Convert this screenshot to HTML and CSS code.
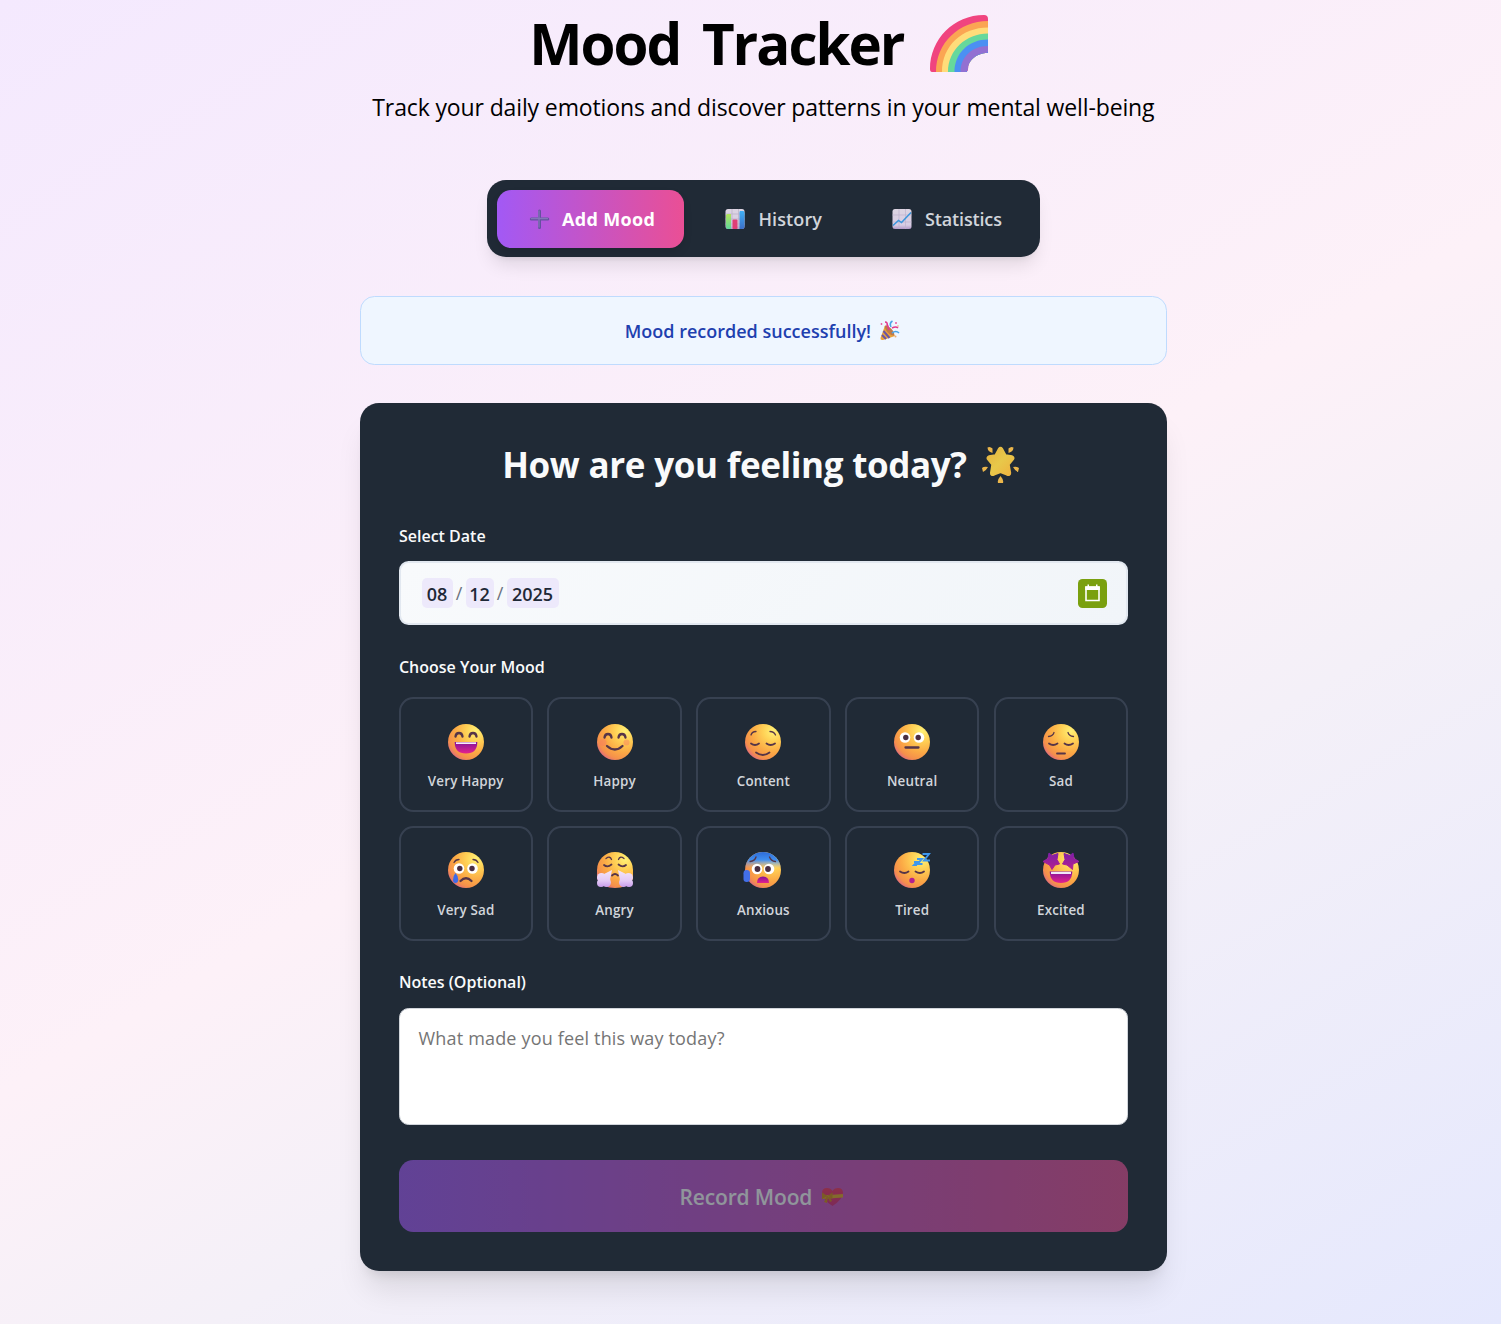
FILE: index.html
```html
<!DOCTYPE html>
<html lang="en">
<head>
<meta charset="utf-8">
<title>Mood Tracker</title>
<link rel="stylesheet" href="styles.css">
</head>
<body>
<svg class="defs" aria-hidden="true">
  <defs>
    <radialGradient id="skin" cx="0.78" cy="0.2" r="0.95">
      <stop offset="0" stop-color="#fff176"/><stop offset="0.3" stop-color="#ffd055"/><stop offset="0.62" stop-color="#fba945"/><stop offset="0.84" stop-color="#f5904b"/><stop offset="1" stop-color="#dd6488"/>
    </radialGradient>
    <linearGradient id="mouth" x1="0" y1="0" x2="0" y2="1"><stop offset="0" stop-color="#84129a"/><stop offset="1" stop-color="#e5228c"/></linearGradient>
    <linearGradient id="cold" x1="0" y1="0" x2="0" y2="1"><stop offset="0" stop-color="#2e6bd8"/><stop offset="0.22" stop-color="#3f8ff0"/><stop offset="0.45" stop-color="#9a9ee0" stop-opacity="0"/></linearGradient>
    <linearGradient id="stars" x1="0" y1="0" x2="0" y2="1"><stop offset="0" stop-color="#7f1ea8"/><stop offset="1" stop-color="#b3208f"/></linearGradient>
    <linearGradient id="steam" gradientUnits="userSpaceOnUse" x1="0" y1="18" x2="0" y2="36"><stop offset="0" stop-color="#f3e6fb"/><stop offset="0.6" stop-color="#e3c9f6"/><stop offset="1" stop-color="#c495ea"/></linearGradient>
    <linearGradient id="paper" x1="0" y1="0" x2="0" y2="1"><stop offset="0" stop-color="#dcd4e2"/><stop offset="0.8" stop-color="#d8cde4"/><stop offset="1" stop-color="#b39ac8"/></linearGradient>
    <linearGradient id="green" x1="0" y1="0" x2="0" y2="1"><stop offset="0" stop-color="#b4e35c"/><stop offset="1" stop-color="#5fd79b"/></linearGradient>
    <linearGradient id="blue" x1="0" y1="0" x2="0" y2="1"><stop offset="0" stop-color="#3fb0f5"/><stop offset="1" stop-color="#3c6fc8"/></linearGradient>
    <linearGradient id="sun" x1="0" y1="0" x2="1" y2="1"><stop offset="0" stop-color="#e6b23e"/><stop offset="0.5" stop-color="#e8c84a"/><stop offset="1" stop-color="#efb13f"/></linearGradient>
    <linearGradient id="heart" x1="0" y1="0" x2="0" y2="1"><stop offset="0" stop-color="#f8365d"/><stop offset="1" stop-color="#d92a7a"/></linearGradient>
  </defs>
</svg>

<main class="page">
  <header class="header">
    <h1 class="title"><span>Mood Tracker</span>
      <svg class="rainbow" viewBox="0 0 58 57">
        <path d="M2 57Q0 57 0 54C0 24 24 0 54 0Q58 0 58 4V36Q58 38 55 38C45 38 38 46 38 54Q38 57 35 57Z" fill="#f0447f"/>
        <path d="M6 57C6 28 29 6 58 6V38C46 38 37 46 37 57Z" fill="#fba553"/>
        <path d="M12 57C12 31 32 12.500 58 12.500V38C46 38 37 46 37 57Z" fill="#ffdc7a"/>
        <path d="M18 57C18 35 36 18.500 58 18.500V38C46 38 37 46 37 57Z" fill="#66d89c"/>
        <path d="M24.500 57C24.500 38 39 24.500 58 24.500V38C46 38 37 46 37 57Z" fill="#4b90f3"/>
        <path d="M30.500 57C30.500 42 42 31 58 31V36Q58 38 55 38C45 39 38 46 38 54Q37.500 57 35 57Z" fill="#9270d2"/>
      </svg>
    </h1>
    <p class="subtitle">Track your daily emotions and discover patterns in your mental well-being</p>
  </header>

  <nav class="tabs">
    <button class="tab tab-add active">
      <svg class="tab-icon" viewBox="0 0 20 20"><path d="M10.500 2V18.500M2.300 10H18.800" stroke="#65519f" stroke-width="3" stroke-linecap="round"/><path d="M10 2V18M2.300 9.500H18.500" stroke="#8376b8" stroke-width="1.300" stroke-linecap="round"/></svg>
      <span>Add Mood</span>
    </button>
    <button class="tab tab-history">
      <svg class="tab-icon" viewBox="0 0 20 20"><rect x=".5" width="19" height="20" rx="2.500" fill="url(#paper)"/><path d="M7 0V20M13.500 0V20M.5 5H19.500M.5 10H19.500M.5 15H19.500" stroke="#b9b0c6" stroke-width=".7"/><path d="M2 5H6V20H3Q1 20 1 18V6Z" fill="url(#green)"/><rect x="7.500" y="10.500" width="5" height="9.500" rx="1" fill="#df3e76"/><path d="M15 2H18.500Q19.500 3 19.500 4V17.500Q19.500 20 17 20H14.500V3Z" fill="url(#blue)"/></svg>
      <span>History</span>
    </button>
    <button class="tab tab-stats">
      <svg class="tab-icon" viewBox="0 0 20 20"><rect x=".5" width="19" height="20" rx="2.500" fill="url(#paper)"/><path d="M7 0V20M13.500 0V20M.5 6H19.500M.5 13H19.500" stroke="#bfb3cd" stroke-width=".7"/><path d="M1 16.500L6.500 11.500L9.500 13.500L19 3.500" fill="none" stroke="#3b96dc" stroke-width="1.500"/></svg>
      <span>Statistics</span>
    </button>
  </nav>

  <div class="notice"><span>Mood recorded successfully!</span>
    <svg class="party" viewBox="0 0 20 20"><path d="M5 4.500Q12 8 15 15L3 19Q0 19.500 .5 17Z" fill="#e9a23b"/><path d="M3.500 10L9.500 17M2 14L6 18" stroke="#6b55a5" stroke-width="2"/><ellipse cx="9.500" cy="9.500" rx="2.500" ry="6.500" transform="rotate(-43 9.500 9.500)" fill="#c07a48"/><path d="M7 5Q8 1 5 1M9 9L7.500 4M12 7Q16 5 18 7" fill="none" stroke="#e23a8e" stroke-width="1.600"/><path d="M11 6Q9 2 12.500 0M12 12Q16 9 19 12" fill="none" stroke="#4aa5e8" stroke-width="1.600"/><circle cx="1.500" cy="3" r=".9" fill="#e85aa0"/><circle cx="16" cy="2" r="1" fill="#e85aa0"/><circle cx="15.500" cy="15.500" r="1" fill="#edae6e"/><circle cx="18" cy="5" r=".8" fill="#edae6e"/></svg>
  </div>

  <section class="card">
    <h2 class="heading"><span>How are you feeling today?</span>
      <svg class="star" viewBox="0 0 37 37"><path d="M17 3Q18.500 1 20 3L23.500 9.500L30 10.500Q32 11.500 31 13L26.500 18.500L28 27Q28 29.500 25 28.500L18.500 26L12 28.500Q9 29.500 9.200 27L10.500 18.500L6 13Q5 11.500 7 10.500L13.500 9.500Z" fill="url(#sun)" stroke="url(#sun)" stroke-width="2.400" stroke-linejoin="round"/><g fill="#ebb64b"><path d="M5.500 1.500Q8 0 10.500 2.500L10.500 7Q5.500 5.500 5.500 1.500ZM31.500 1.500Q29 0 26.500 2.500L26.500 7Q31.500 5.500 31.500 1.500ZM0 22Q2 20 6 21Q4 25 1 26ZM37 22Q35 20 31 21Q33 25 36 26ZM18.500 30Q22 34 21 37H16Q15 34 18.500 30Z"/></g></svg>
    </h2>

    <div class="label label-date">Select Date</div>
    <div class="date">
      <div class="date-fields"><b class="mm">08</b><i>/</i><b class="dd">12</b><i>/</i><b class="yy">2025</b></div>
      <svg class="calendar" viewBox="0 0 29 29"><rect width="29" height="29" rx="4.500" fill="#7aa00f"/><path d="M8 8H21V21.500H8Z" fill="none" stroke="#fff" stroke-width="1.600"/><path d="M7.200 7.500H21.800V11H7.200ZM9.500 5.500H11V8H9.500ZM18 5.500H19.500V8H18Z" fill="#fff"/></svg>
    </div>

    <div class="label label-mood">Choose Your Mood</div>
    <div class="moods">
      <button class="mood"><svg viewBox="0 0 36 36"><circle cx="18" cy="18" r="18" fill="url(#skin)"/><path d="M7.500 12.500Q8 9 11 9T14.500 12.500M21.500 12.500Q22 9 25 9T28.500 12.500" class="line thick"/><path d="M6.700 18H29.300Q29.300 29.500 18 29.500T6.700 18Z" fill="url(#mouth)"/><path d="M8 18.300H28V20H8Z" fill="#f5eafa"/></svg><span>Very Happy</span></button>
      <button class="mood"><svg viewBox="0 0 36 36"><circle cx="18" cy="18" r="18" fill="url(#skin)"/><g fill="#fa7b62" opacity=".45"><circle cx="6" cy="18.500" r="3.500"/><circle cx="29.500" cy="18.500" r="3"/></g><path d="M7.500 13.500Q8 10 11 10T14.500 13.500M21.500 13.500Q22 10 25 10T28.500 13.500M10 22Q18 29 25.500 22" class="line thick"/></svg><span>Happy</span></button>
      <button class="mood"><svg viewBox="0 0 36 36"><circle cx="18" cy="18" r="18" fill="url(#skin)"/><path d="M6 11Q7 7.500 11 7.500M25 7.500Q29 7.500 30.500 11" class="line thin"/><path d="M6 19.500Q10 22.500 14 19.500M21.500 19.500Q25.500 22.500 30 19.500M11 28.500Q18 33.500 24.500 28.500" class="line"/></svg><span>Content</span></button>
      <button class="mood"><svg viewBox="0 0 36 36"><circle cx="18" cy="18" r="18" fill="url(#skin)"/><g fill="#fff"><circle cx="11" cy="13.500" r="5.300"/><circle cx="25" cy="13.500" r="5.300"/></g><g fill="#4a2f42"><circle cx="11.800" cy="13.500" r="2.700"/><circle cx="24.200" cy="13.500" r="2.700"/></g><path d="M11.500 23.500H24.500" class="line thick"/></svg><span>Neutral</span></button>
      <button class="mood"><svg viewBox="0 0 36 36"><circle cx="18" cy="18" r="18" fill="url(#skin)"/><path d="M5.500 12.500Q10 12 11 8.500M25 8.500Q26 12 30.500 12.500" class="line thin"/><path d="M6 19.500Q10 22.500 14.500 19.500M21.500 19.500Q25.500 22.500 30 19.500M14 29.500H22" class="line"/></svg><span>Sad</span></button>
      <button class="mood"><svg viewBox="0 0 36 36"><circle cx="18" cy="18" r="18" fill="url(#skin)"/><path d="M6 10.500Q7.500 7.500 11 7.500M25 7.500Q28.500 7.500 30 10.500" class="line thin"/><g fill="#fff"><circle cx="11" cy="16.500" r="5.300"/><circle cx="24.500" cy="16.500" r="5.300"/></g><g fill="#4a2f42"><circle cx="11.800" cy="16.500" r="2.700"/><circle cx="24" cy="16.500" r="2.700"/></g><path d="M12.500 29Q18 23.500 23.500 29" class="line thick"/><path d="M7.500 21Q10.500 24 10.300 28Q10 31 7.500 31T5 28Q4.800 24 7.500 21Z" fill="#3f6be8"/></svg><span>Very Sad</span></button>
      <button class="mood"><svg viewBox="0 0 36 36"><path d="M0 18A18 18 0 0 1 36 18V27Q30 36 18 36T0 27Z" fill="url(#skin)"/><path d="M9 6.500Q13 3.500 14.500 7.500M21.500 7.500Q23 3.500 27 6.500" class="line thin"/><path d="M7 13Q10.500 16 14.500 12.500M21.500 12.500Q25.500 16 29 13M15 23.500Q18 20.500 21 23.500" class="line"/><g fill="url(#steam)"><path d="M15 18L13 28L7 30L5 23ZM21 18L23 28L29 30L31 23Z"/><circle cx="4.500" cy="25.500" r="4.500"/><circle cx="4" cy="31" r="4"/><circle cx="9.500" cy="30.500" r="4.500"/><circle cx="31.500" cy="25.500" r="4.500"/><circle cx="32" cy="31" r="4"/><circle cx="26.500" cy="30.500" r="4.500"/></g></svg><span>Angry</span></button>
      <button class="mood"><svg viewBox="0 0 36 36"><circle cx="18" cy="18" r="18" fill="url(#skin)"/><circle cx="18" cy="18" r="18" fill="url(#cold)"/><path d="M5 9.500Q10 9 11 5M24.500 5Q26 9 30.500 9.500" class="line thin"/><g fill="#fff"><circle cx="12" cy="17" r="5.300"/><circle cx="24" cy="17" r="5.300"/></g><g fill="#4a2f42"><circle cx="12.500" cy="17" r="2.900"/><circle cx="23" cy="17" r="2.900"/></g><path d="M12 31Q12 24.500 18 24.500T24 31Z" fill="url(#mouth)"/><rect x="-1.500" y="18" width="6.500" height="12" rx="3.200" fill="#426fe9"/></svg><span>Anxious</span></button>
      <button class="mood"><svg viewBox="0 0 36 36"><circle cx="18" cy="18" r="18" fill="url(#skin)"/><path d="M6 19.500Q10.500 22.500 14.500 19.500M21.500 19.500Q26 22.500 30 19.500" class="line"/><circle cx="18" cy="28.500" r="2.700" fill="#b3208f"/><path d="M28.500 2H35L30 8.500H36M23 7H28L23.500 12H28.500M20 10H23L20 13H23" fill="none" stroke="#3e98ee" stroke-width="1.900"/></svg><span>Tired</span></button>
      <button class="mood"><svg viewBox="0 0 36 36"><circle cx="18" cy="18" r="18" fill="url(#skin)"/><path d="M6 1L9 3.500L15 1.500L14 7.500L16.500 12L12 13L9 17.500L6.500 13L0 9.500L5 6.500ZM30 1L27 3.500L21 1.500L22 7.500L19.500 12L24 13L29.500 17.500L30 12L36 9.500L31 6.500Z" fill="url(#stars)" stroke="url(#stars)" stroke-linejoin="round"/><path d="M6.700 19.500H29.300Q29 31 18 31T6.700 19.500Z" fill="url(#mouth)"/><path d="M8 19.800H28V22H8Z" fill="#f0e6f8"/></svg><span>Excited</span></button>
    </div>

    <div class="label label-notes">Notes (Optional)</div>
    <div class="notes">What made you feel this way today?</div>

    <button class="submit"><span>Record Mood</span>
      <svg class="gift" viewBox="0 0 22 20"><path d="M11.500 19Q1 12 1 6Q1 1 6 1Q10 1 11.500 4Q13 1 17 1Q22 1 22 6Q22 12 11.500 19Z" fill="url(#heart)"/><path d="M1 8.500L22 7V10.500L1 12Z" fill="#e5aa25"/><path d="M6.500 9L1 5.500V12ZM6.500 9L11.500 5.500V12ZM6 9L3 15L6 16L7 10L9 15L11 14L8 9Z" fill="#d58d14"/></svg>
    </button>
  </section>
</main>
</body>
</html>
```
FILE: styles.css
```css
* { box-sizing: border-box; }
body {
  margin: 0;
  min-height: 1324px;
  font-family: "Open Sans", "Noto Sans", sans-serif;
  background: linear-gradient(150deg, #f4e9fe 0%, #fdf1f8 50%, #f4f0f8 66%, #e5e8fd 100%);
}
button { font-family: inherit; border: 0; }
svg { display: block; flex: none; overflow: visible; }
.defs { position: absolute; width: 0; height: 0; }
.page { width: 806.4px; margin-left: 360.2px; height: 1324px; }
.header { height: 180px; }
.title { margin: 0; height: 88px; display: flex; justify-content: center; align-items: center; gap: 26px; font-size: 56.500px; font-weight: 700; letter-spacing: -2px; word-spacing: 9px; white-space: nowrap; }
.title span { margin-top: -2px; }
.rainbow { width: 58px; height: 57px; margin: -2px 10px 0 0; }
.subtitle { margin: 0; height: 38px; line-height: 38px; text-align: center; font-size: 23px; letter-spacing: -0.13px; white-space: nowrap; }
.tabs { width: 553px; height: 77px; margin: 0 auto; padding: 10px; display: flex; gap: 9.6px; border-radius: 19px; background: #202a36; box-shadow: 0 12px 18px -4px #0000001a, 0 5px 7px -5px #0000001a; }
.tab { height: 58px; padding: 0 0 0 32px; display: flex; align-items: center; gap: 13px; border-radius: 14.400px; background: none; color: #d1d5db; font-size: 18px; font-weight: 600; white-space: nowrap; }
.tab-icon { width: 20px; height: 20px; }
.tab-add { width: 187px; font-weight: 700; letter-spacing: 0.35px; }
.tab-history { width: 157px; letter-spacing: 0.1px; }
.tab-stats { width: 169px; letter-spacing: -0.15px; }
.active { color: #fff; background: linear-gradient(90deg, #a259f5, #ea4f95); box-shadow: 0 5px 8px #0000001a; }
.notice { height: 69px; margin-top: 39px; display: flex; justify-content: center; align-items: center; gap: 9px; border: 1px solid #bfdbfe; border-radius: 14.400px; background: #eff6ff; color: #1e40af; font-size: 18px; font-weight: 600; white-space: nowrap; }
.party { width: 20px; height: 20px; margin: 1px 2px 0 0; }
.card { height: 868px; margin-top: 38px; padding: 38px 38.4px; border-radius: 19px; background: #202a36; color: #f9fafb; box-shadow: 0 24px 30px -6px #0000001a, 0 10px 12px -7px #0000001a; }
.heading { margin: 0; height: 46px; display: flex; justify-content: center; align-items: center; gap: 15px; font-size: 35px; font-weight: 700; letter-spacing: -0.4px; word-spacing: 0.5px; white-space: nowrap; }
.star { width: 37px; height: 37px; margin-right: 6px; }
.label { height: 24px; line-height: 24px; font-size: 16px; font-weight: 600; text-indent: 0.4px; white-space: nowrap; }
.label-date { margin-top: 37px; }
.date { height: 64px; margin-top: 13px; padding: 0 19px 0 21px; display: flex; align-items: center; justify-content: space-between; border: 2px solid #e2e8f0; border-radius: 9.600px; background: linear-gradient(135deg, #f8fafc, #f1f5f9); color: #1f2937; }
.date-fields { display: flex; align-items: center; font-size: 18px; }
.date b { height: 30px; line-height: 32px; border-radius: 5px; background: #ede9fb; font-weight: 600; text-align: center; }
.date i { width: 13px; text-align: center; font-style: normal; color: #6b7280; }
.mm { width: 31px; }
.dd { width: 28px; }
.yy { width: 52px; }
.calendar { width: 29px; height: 29px; }
.label-mood { margin-top: 30px; }
.moods { margin-top: 18px; display: grid; grid-template-columns: repeat(5, 1fr); gap: 14.400px; }
.mood { height: 114.700px; padding: 25px 0 0; display: flex; flex-direction: column; align-items: center; gap: 11px; border: 2px solid #374151; border-radius: 14.400px; background: none; color: #d1d5db; font-size: 13.400px; line-height: 20px; font-weight: 600; letter-spacing: 0.17px; white-space: nowrap; }
.mood svg { width: 36px; height: 36px; }
.mood:nth-child(n+6) { padding-top: 24px; gap: 12px; }
.line { fill: none; stroke: #563548; stroke-width: 1.800; stroke-linecap: round; }
.thick { stroke-width: 2.300; }
.thin { stroke-width: 1.300; }
.label-notes { margin-top: 29.2px; }
.notes { height: 117px; margin-top: 14px; padding: 16px 19px; border: 1px solid #d1d5db; border-radius: 9.600px; background: #fff; color: #757575; font-size: 18px; letter-spacing: 0.17px; line-height: 27px; white-space: nowrap; }
.submit { width: 100%; height: 72px; margin-top: 35px; padding: 2px 0 0; display: flex; justify-content: center; align-items: center; gap: 9px; border-radius: 14.400px; background: linear-gradient(90deg, #a259f5, #ea4f95); color: #fff; font-size: 21px; font-weight: 600; letter-spacing: -0.15px; white-space: nowrap; opacity: .5; }
.gift { width: 22px; height: 20px; margin-right: 4px; }
```
